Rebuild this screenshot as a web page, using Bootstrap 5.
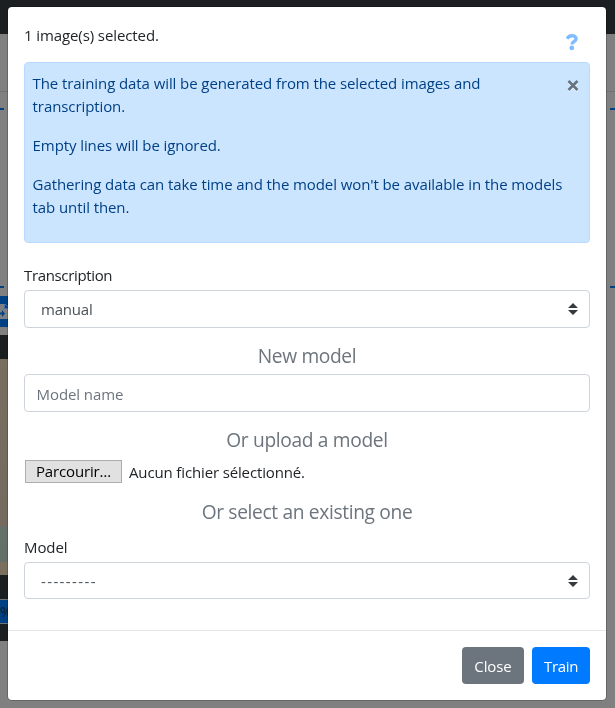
<!DOCTYPE html>
<html lang="en">
<head>
<meta charset="utf-8">
<meta name="viewport" content="width=device-width, initial-scale=1">
<title>Train model</title>
<link href="https://cdn.jsdelivr.net/npm/bootstrap@5.3.0/dist/css/bootstrap.min.css" rel="stylesheet">
<style>
html,body{height:100%;overflow:hidden}
body{font-family:"Open Sans","Noto Sans",sans-serif;font-size:15px;line-height:24px;color:#212529;background:#808080;letter-spacing:-.1px}
.page-nav{height:34px;background:#1b1f22}
.page-head{height:58px;border-bottom:1px solid #717171}
.page-rule{height:2px;background:#004280;width:4px}
.page-rule.end{width:5px}
.page-tabs{height:196px;padding:16px 0 0}
.rule-gap{height:176px}
.tools{height:31px;width:100px;background:#004085}
.tools svg{display:block}
.dark-bar{height:24px;background:#1b1f22;width:100px;margin-top:8px}
.scan{height:216px;width:100px;background:linear-gradient(#786e60 0,#746b5e 77%,#65706a 78%,#63706a 94%,#7b705e 94%)}
.dark-foot{height:66px;width:100px;background:#1b1f22;padding-top:24px}
.percent{height:25px;background:#004085;border-top:1px solid #6c757d;border-bottom:1px solid #6c757d;color:#171b1f;line-height:23px}
.train-modal .modal-dialog{margin:7px 9px 0 8px;max-width:none}
.train-modal .modal-content{height:693px;border:0;border-radius:4px;overflow:hidden;box-shadow:0 0 0 1px rgba(0,0,0,.2)}
.train-modal .modal-body{padding:16px 16px 0;flex:0 0 623px}
.head-row{height:39px}
.head-row svg{margin:11px 12px 0 0}
.alert-info-box{height:181px;background:#cce5ff;border:1px solid #b8daff;color:#004085;border-radius:4px;padding:9px 8px 9px 7.6px;line-height:23.4px;letter-spacing:-.09px}
.alert-info-box p{margin-bottom:15.4px}
.alert-info-box svg{margin:8px 2px 0 0}
.lbl{margin-top:20px;height:27px;line-height:25px;display:block}
.lbl-tight{letter-spacing:-.35px}
.lbl-model{margin-top:5px}
.box{height:38px;border:1px solid #ced4da;border-radius:4px;color:#495057;background:#fff;padding:0 11px 0 16px}
.box.low{height:37px}
.box.field{padding:2px 12px 0 11.6px;font-size:15px;letter-spacing:-.1px}
.box.field::placeholder{color:#6c757d;opacity:1}
.tight{letter-spacing:-.2px}
.dashes{letter-spacing:1.38px;padding-top:1px}
.sub{font-size:19.2px;font-weight:400;color:#6c757d;text-align:center;line-height:24px;height:30px;margin:16px 0 0;letter-spacing:-.35px}
.browse{width:97px;height:23px;border:1px solid #adadad;background:#e1e1e1;color:#000;line-height:21px;padding:0;margin:0 7px 0 1px;font-size:15px;letter-spacing:-.15px}
.file-row{height:26px}
.file-name{letter-spacing:-.14px;padding-top:1px}
.train-modal .modal-footer{border-top:1px solid #e5e8eb;height:70px;padding:16px 16px 0 0;gap:8px;align-items:flex-start;flex-wrap:nowrap}
.act{height:37px;margin:0;padding:1px 0 0;border:0;border-radius:4px;color:#fff;font-size:15px;letter-spacing:-.1px}
.act-close{width:62px;background:#6c757d}
.act-train{width:58px;background:#007bff;letter-spacing:-.35px}
</style>
</head>
<body>
<div class="page">
  <div class="page-nav"></div>
  <div class="page-head"></div>
  <div class="page-tabs">
    <div class="d-flex justify-content-between"><div class="page-rule"></div><div class="page-rule end"></div></div>
    <div class="rule-gap"></div>
    <div class="d-flex justify-content-between"><div class="page-rule"></div><div class="page-rule end"></div></div>
  </div>
  <div class="mt-2 tools">
    <svg width="8" height="31" viewBox="0 0 8 31"><path fill="#7f8081" d="M0 8h4v5h4v10H0z"/><path fill="none" stroke="#5470a0" d="M4.5 8v4.5H8M5 8l3 3"/><path fill="#004085" d="M0 16.500h2v-2.500l3 3.500L2 21v-2.500H0z"/></svg>
  </div>
  <div class="dark-bar"></div>
  <div class="scan"></div>
  <div class="dark-foot"><div class="percent">%</div></div>
</div>

<div class="modal d-block train-modal" tabindex="-1">
  <div class="modal-dialog">
    <form class="modal-content">
      <div class="modal-body">
        <div class="head-row d-flex justify-content-between">
          <span>1 image(s) selected.</span>
          <svg width="12" height="17" viewBox="0 0 12 17"><path fill="none" stroke="#80bdff" stroke-width="3.4" d="M1.200 4.800C2 2.800 3.700 1.700 5.900 1.700c2.600 0 4.200 1.200 4.200 3.100 0 2.900-4.100 2.400-4.100 5.600"/><circle cx="5.800" cy="13.900" r="2.400" fill="#80bdff"/></svg>
        </div>
        <div class="alert-info-box d-flex justify-content-between align-items-start">
          <div>
            <p>The training data will be generated from the selected images and<br>transcription.</p>
            <p>Empty lines will be ignored.</p>
            <p class="text-nowrap">Gathering data can take time and the model won't be available in the models<br>tab until then.</p>
          </div>
          <svg class="flex-shrink-0" width="12" height="12" viewBox="0 0 12 12"><path stroke="#fff" stroke-opacity=".6" stroke-width="2.600" d="m1.500 2 9 9m0-9-9 9"/><path stroke="#667380" stroke-width="2.600" d="m1.500 1 9 9m0-9-9 9"/></svg>
        </div>
        <label class="lbl lbl-tight">Transcription</label>
        <div class="box d-flex align-items-center justify-content-between"><span class="tight">manual</span>
          <svg width="10" height="12" viewBox="0 0 10 12"><path fill="#343a40" d="M0 5 5 0l5 5zM0 7h10l-5 5z"/></svg></div>
        <h5 class="sub">New model</h5>
        <input class="box field w-100 d-block" type="text" placeholder="Model name">
        <h5 class="sub">Or upload a model</h5>
        <div class="file-row d-flex align-items-center">
          <button type="button" class="browse">Parcourir…</button><span class="file-name">Aucun fichier sélectionné.</span>
        </div>
        <h5 class="sub">Or select an existing one</h5>
        <label class="lbl lbl-model">Model</label>
        <div class="box low d-flex align-items-center justify-content-between"><span class="dashes">---------</span>
          <svg width="10" height="12" viewBox="0 0 10 12"><path fill="#343a40" d="M0 5 5 0l5 5zM0 7h10l-5 5z"/></svg></div>
      </div>
      <div class="modal-footer">
        <button type="button" class="btn act act-close">Close</button>
        <button type="button" class="btn act act-train">Train</button>
      </div>
    </form>
  </div>
</div>
<script src="https://cdn.jsdelivr.net/npm/bootstrap@5.3.0/dist/js/bootstrap.bundle.min.js"></script>
</body>
</html>
